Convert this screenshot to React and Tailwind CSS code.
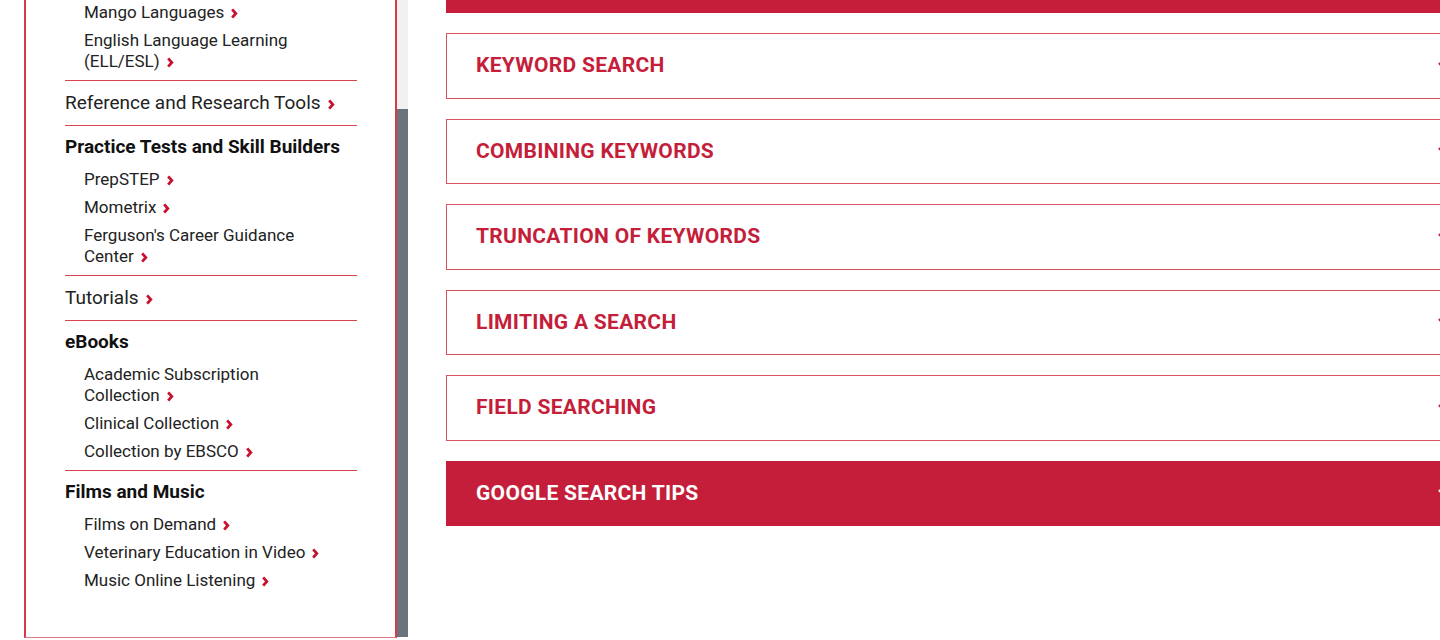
import React from "react";

const sections = [
  { items: ["Mango Languages", "English Language Learning (ELL/ESL)"], first: true },
  { link: "Reference and Research Tools" },
  {
    heading: "Practice Tests and Skill Builders",
    items: ["PrepSTEP", "Mometrix", "Ferguson's Career Guidance Center"],
  },
  { link: "Tutorials" },
  {
    heading: "eBooks",
    items: ["Academic Subscription Collection", "Clinical Collection", "Collection by EBSCO"],
  },
  {
    heading: "Films and Music",
    items: ["Films on Demand", "Veterinary Education in Video", "Music Online Listening"],
  },
];

const panels = [
  "Keyword Search",
  "Combining Keywords",
  "Truncation of Keywords",
  "Limiting a Search",
  "Field Searching",
];

const Chevron = () => (
  <svg
    viewBox="0 0 8 12"
    className="inline-block w-[8px] h-[11px] align-[-1px] ml-[6px]"
    fill="none"
    stroke="#c8102e"
    strokeWidth="3"
  >
    <path d="M2 1.5l4 4.5-4 4.5" />
  </svg>
);

// keep the chevron glued to the last word
const LinkText = ({ text }) => {
  const words = text.split(" ");
  const last = words.pop();
  return (
    <>
      {words.length > 0 && words.join(" ") + " "}
      <span className="whitespace-nowrap">
        {last}
        <Chevron />
      </span>
    </>
  );
};

const SubList = ({ items }) => (
  <ul className="space-y-[7px] pl-[19px] pr-[24px]">
    {items.map((item) => (
      <li key={item} className="text-[17px] leading-[21px] text-[#222]">
        <LinkText text={item} />
      </li>
    ))}
  </ul>
);

const Sidebar = () => (
  <div className="w-[373px] h-[638px] shrink-0 border-l-2 border-r-2 border-b border-[#d63a48] border-b-[#e07a84] bg-white">
    <div className="pl-[39px] pr-[38px]">
      {sections.map((s, i) => {
        const border = s.first ? "" : "border-t border-[#d94452]";
        if (s.link) {
          return (
            <div key={i} className={border + " pt-[9.5px] pb-[9.5px]"}>
              <span className="text-[19px] leading-[24px] text-[#222]">
                <LinkText text={s.link} />
              </span>
            </div>
          );
        }
        if (s.first) {
          return (
            <div key={i} className="pt-[2px] pb-[8px]">
              <SubList items={s.items} />
            </div>
          );
        }
        return (
          <div key={i} className={border + " pt-[9px] pb-[8.5px]"}>
            <h3 className="text-[19px] leading-[24px] font-bold text-[#111]">{s.heading}</h3>
            <div className="mt-[9.5px]">
              <SubList items={s.items} />
            </div>
          </div>
        );
      })}
    </div>
  </div>
);

const Panel = ({ title, filled }) => (
  <div
    className={
      "w-[1037px] h-[65.5px] shrink-0 flex items-center justify-between pl-[29px] pr-[30px] border " +
      (filled
        ? "bg-[#c41e3a] border-[#c41e3a] text-white"
        : "bg-white border-[#d9525f] text-[#c41e3a]")
    }
  >
    <span className="text-[21px] font-bold uppercase tracking-[0.3px]">{title}</span>
    <svg
      viewBox="0 0 14 8"
      className="w-[14px] h-[8px]"
      fill="none"
      stroke={filled ? "#ffffff" : "#c41e3a"}
      strokeWidth="2.4"
    >
      <path d="M1 1l6 6 6-6" />
    </svg>
  </div>
);

export default function App() {
  return (
    <div
      className="w-[1440px] h-[640px] overflow-hidden bg-white flex"
      style={{ fontFamily: "Roboto, 'Liberation Sans', sans-serif" }}
    >
      <div className="pl-[24px] flex shrink-0">
        <Sidebar />
        <div className="w-[11px] h-[637px] flex flex-col">
          <div className="h-[109px] bg-[#f1f1f1]" />
          <div className="flex-1 bg-[#6b737c]" />
        </div>
      </div>
      <main className="ml-[38px] flex flex-col gap-[20px] -mt-[52.5px]">
        <div className="w-[1037px] h-[65.5px] shrink-0 bg-[#c41e3a]" />
        {panels.map((p) => (
          <Panel key={p} title={p} />
        ))}
        <Panel title="Google Search Tips" filled />
      </main>
    </div>
  );
}
